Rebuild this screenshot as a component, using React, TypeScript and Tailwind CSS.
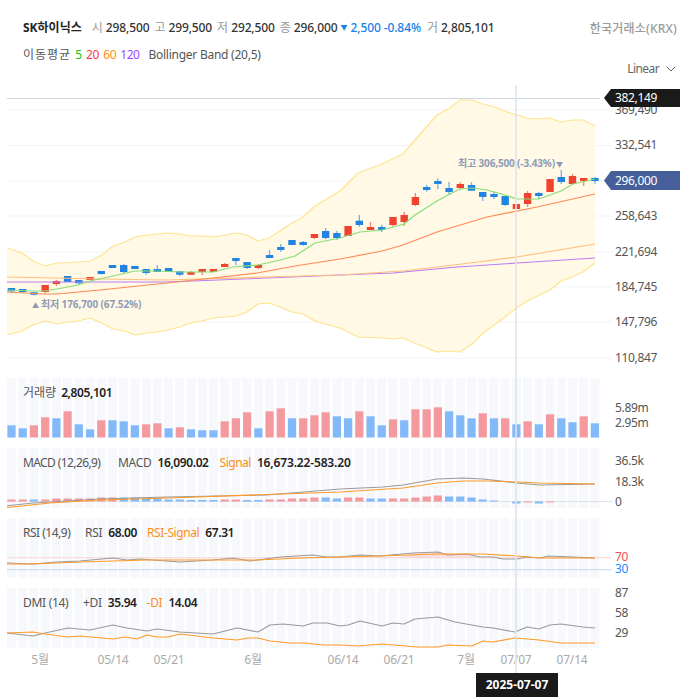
import { ChevronDown } from 'lucide-react';
import type { ReactNode } from 'react';

type Pt = [number, number];
// top, bottom, wickTop, wickBottom, up
type Candle = [number, number, number, number, 0 | 1];

const X = (i: number) => 11.5 + 11.22 * i;
const COUNT = 53;
const idx = Array.from({ length: COUNT }, (_, i) => i);
const pts = (p: Pt[]) => p.map(([x, y]) => `${x},${y}`).join(' ');

const candles: Candle[] = [
  [288, 291.3, 288, 292.7, 0], [289, 292, 289, 293, 0], [292.3, 294.7, 292, 295.5, 0], [285, 292, 285, 293.3, 1],
  [281, 284, 280, 286, 1], [276, 282, 276, 282, 0], [280, 283.3, 280, 284, 0], [277, 280, 277, 280, 1],
  [271, 274, 271, 274.7, 0], [265, 268, 265, 268, 0], [265, 272, 264, 273.3, 0], [266, 269, 266, 269, 0],
  [269, 273, 269, 274.7, 0], [269, 272, 265, 272, 0], [268, 272, 268, 272, 0], [271.3, 274.7, 271, 276, 0],
  [272, 274.7, 271, 274.7, 1], [269, 272, 269, 275, 1], [269, 272, 269, 272, 1], [264, 267, 263, 267, 1],
  [258, 261, 258, 265, 0], [262, 268, 262, 269, 0], [265, 268, 264, 269.3, 1], [255, 258, 250, 258, 0],
  [247, 250, 244, 251.7, 0], [240, 245, 240, 245, 0], [242, 245, 241, 245.7, 0], [234, 238, 234, 239, 1],
  [231, 238, 228, 239, 0], [233, 238, 231, 240, 0], [226, 236, 226, 236, 1], [220.7, 225, 215, 226.7, 0],
  [227, 230, 222, 230, 1], [227, 230, 224.7, 232, 0], [217, 225, 217, 226.7, 1], [215, 222, 212, 226, 1],
  [197, 205, 193, 206, 1], [187, 190, 185, 191.7, 0], [181, 184, 178.3, 189, 0], [188, 192, 182, 195, 0],
  [184, 188, 182.3, 189.3, 1], [185, 190.7, 182.3, 190.7, 0], [192, 197, 192, 201, 0], [194, 197, 191.7, 199, 0],
  [196, 205, 196, 206, 0], [204, 209, 204, 209, 1], [193, 204, 191, 207, 1], [193, 196, 192, 199, 0],
  [179, 192, 179, 192, 1], [177, 182, 170, 184, 0], [176, 184, 174, 184, 1], [178, 181, 178, 186, 1],
  [178, 181, 177, 184, 0],
];

const bandTop: Pt[] = [
  [7, 248], [22, 253], [33, 261], [45, 266], [57, 263], [78, 262], [90, 261], [102, 255], [113, 246], [125, 242],
  [135, 237], [147, 235], [157, 234], [168, 233], [180, 234], [190, 236], [202, 236], [213, 237], [225, 235],
  [236, 233], [247, 235], [258, 241], [269, 238], [280, 231], [292, 223], [303, 217], [315, 206], [325, 200],
  [340, 191], [358, 173], [382, 164], [403, 154], [422, 132], [437, 115], [450, 108], [460, 100], [472, 100],
  [483, 104], [495, 107], [507, 112], [517, 115], [527, 118], [537, 119], [549, 118], [561, 122], [572, 120],
  [583, 120], [595, 126],
];
const bandBottom: Pt[] = [
  [7, 335], [22, 331], [33, 325], [45, 321], [57, 324], [68, 322], [78, 321], [90, 318], [102, 323], [113, 329],
  [125, 331], [135, 335], [147, 333], [157, 332], [168, 330], [180, 327], [190, 323], [202, 321], [213, 318],
  [225, 317], [236, 316], [247, 312], [258, 304], [269, 303], [280, 307], [292, 312], [303, 314], [315, 321],
  [325, 324], [340, 328], [358, 337], [382, 338], [393, 339], [403, 338], [417, 344], [437, 352], [448, 351],
  [460, 352], [472, 344], [483, 333], [497, 323], [515, 309], [527, 301], [550, 290], [561, 281], [572, 277],
  [583, 272], [595, 263],
];
const ma5: Pt[] = [
  [7, 290], [33, 291], [45, 291], [57, 289], [78, 285], [90, 281], [113, 276], [135, 271], [157, 271], [180, 272],
  [213, 272], [233, 267], [258, 265], [280, 260], [295, 256], [315, 243], [340, 238], [360, 232], [382, 230],
  [404, 224], [415, 215], [437, 201], [450, 194], [460, 189], [472, 188], [487, 190], [505, 195], [517, 199],
  [539, 199], [561, 191], [573, 184], [595, 179],
];
const ma20: Pt[] = [
  [7, 292], [43, 294], [57, 294], [100, 290], [167, 283], [213, 278], [257, 273], [295, 266], [340, 259], [382, 251],
  [403, 245], [437, 232], [487, 217], [537, 207], [595, 194],
];
const ma60: Pt[] = [[7, 277], [100, 279], [167, 280], [267, 277], [340, 275], [403, 271], [462, 264], [517, 257], [595, 244]];
const ma120: Pt[] = [[7, 282], [167, 282], [267, 278], [340, 275], [393, 273], [457, 267], [517, 263], [595, 258]];

const volume: [number, 0 | 1][] = [
  [425.3, 0], [428.3, 0], [425.3, 1], [417.3, 1], [418.3, 0], [411.3, 1], [424.3, 0], [429.3, 0], [420.3, 1], [420.3, 0],
  [421.3, 0], [425.3, 0], [424.3, 1], [423.3, 1], [428.3, 0], [427.3, 1], [429.3, 0], [430.3, 0], [430.3, 0], [421.3, 1],
  [418.3, 1], [412.3, 1], [428.3, 0], [411.3, 1], [408.3, 1], [418.3, 0], [418.3, 1], [415.3, 1], [412.3, 1], [416.3, 0],
  [418.3, 0], [411.3, 1], [416.3, 0], [425.3, 0], [419.3, 1], [420.3, 0], [409.3, 1], [409.3, 1], [407.3, 1], [411.3, 0],
  [415.3, 0], [418.3, 0], [413.3, 1], [418.3, 0], [418.3, 1], [424.3, 0], [421.3, 1], [424.3, 0], [414.3, 1], [418.3, 0],
  [422.3, 0], [416.3, 1], [423.3, 0],
];

// macd histogram: [height above the zero line, side]; negative goes below
const macdBars: [number, 0 | 1][] = [
  [2, 1], [2, 1], [2, 0], [2, 1], [3, 1], [3, 1], [3, 1], [3, 1], [4, 1], [4, 1], [4, 0], [4, 0], [3, 0], [3, 0], [2, 0],
  [2, 0], [1.5, 0], [1.5, 0], [1.5, 0], [2, 1], [2, 1], [1.5, 0], [1.5, 0], [2, 1], [2, 1], [3, 1], [3, 1], [4, 1], [4, 0],
  [3, 0], [4, 1], [4, 1], [3, 0], [3, 0], [3, 1], [3, 1], [4, 1], [5, 1], [6, 1], [5, 0], [5, 0], [4, 0], [2, 0], [1, 0],
  [0, 0], [-2, 0], [-1, 1], [-2, 0], [-1, 1], [0, 0], [0, 0], [0, 0], [0, 0],
];
const macdGray: Pt[] = [[7, 505.7], [33, 503], [100, 499], [167, 497], [267, 495], [340, 489], [383, 487], [403, 485], [437, 479], [463, 478], [483, 479], [517, 483], [540, 485], [595, 484]];
const macdOrange: Pt[] = [[7, 507.5], [50, 503], [100, 500], [167, 498], [267, 494.5], [340, 492], [403, 488], [437, 483], [463, 481], [487, 481], [517, 482], [540, 483], [595, 484]];

const rsiGray: Pt[] = [
  [7, 563], [33, 564], [57, 562], [80, 561], [113, 558], [127, 560], [140, 559], [153, 560], [180, 562], [213, 560],
  [233, 558], [250, 561], [280, 557], [313, 555], [327, 557], [340, 557], [360, 555], [380, 556], [413, 553], [438, 552],
  [448, 555], [467, 554], [480, 557], [493, 557], [503, 559], [517, 559], [527, 557], [540, 558], [548, 556], [573, 557], [595, 558],
];
const rsiOrange: Pt[] = [
  [7, 564], [33, 564], [80, 562], [113, 561], [147, 560], [213, 560], [257, 560], [300, 558], [340, 557], [380, 556],
  [438, 554], [483, 554], [517, 556], [540, 558], [595, 558],
];

const dmiGray: Pt[] = [
  [7, 633], [33, 636], [45, 633], [68, 628], [90, 630], [113, 625], [127, 628], [147, 631], [157, 629], [180, 632], [213, 634],
  [237, 628], [258, 632], [270, 625], [283, 624], [303, 626], [313, 623], [327, 623], [340, 626], [348, 625], [360, 621],
  [382, 626], [393, 623], [404, 624], [415, 619], [438, 617], [455, 622], [483, 627], [493, 628], [515, 632], [527, 627],
  [539, 629], [550, 625], [561, 624], [583, 627], [595, 628],
];
const dmiOrange: Pt[] = [
  [7, 633], [33, 632], [45, 634], [68, 637], [80, 636], [113, 639], [125, 637], [137, 639], [147, 635], [157, 637], [168, 637],
  [180, 634], [213, 638], [237, 640], [248, 638], [258, 638], [270, 641], [290, 643], [305, 643], [323, 645], [340, 645],
  [358, 646], [382, 644], [417, 647], [438, 647], [448, 645], [472, 646], [483, 641], [493, 642], [515, 638], [527, 639],
  [539, 640], [561, 643], [573, 643], [583, 643], [595, 643],
];

const priceAxis: [string, number][] = [
  ['369,490', 110], ['332,541', 145], ['258,643', 216], ['221,694', 252], ['184,745', 287], ['147,796', 322], ['110,847', 358],
];
const gridLines = [110, 145.5, 181, 216, 252, 287, 322, 358];
const dateAxis: [string, number][] = [
  ['5월', 40], ['05/14', 113], ['05/21', 169], ['6월', 253], ['06/14', 343], ['06/21', 399], ['7월', 466], ['07/07', 516], ['07/14', 572],
];

const FONT = 'font-["Noto_Sans","Noto_Sans_CJK_KR",sans-serif]';

function AxisText({ y, top, children, className = 'text-[#555]' }: { y: number; top: number; children: ReactNode; className?: string }) {
  return (
    <span className={`absolute left-[615px] text-xs leading-3 tracking-[-0.35px] whitespace-nowrap ${className}`} style={{ top: y - top - 6 }}>
      {children}
    </span>
  );
}

function Stripes({ top, height }: { top: number; height: number }) {
  return (
    <>
      {idx.map((i) => (
        <rect key={i} x={X(i) - 4.5} y={top} width={9} height={height} fill="#f7f8fc" />
      ))}
    </>
  );
}

function Panel({ top, height, className = '', children, labels }: { top: number; height: number; className?: string; children: ReactNode; labels: ReactNode }) {
  return (
    <div className={`relative w-[680px] ${className}`} style={{ height }}>
      <svg className="block" width={680} height={height} viewBox={`0 ${top} 680 ${height}`}>
        {children}
      </svg>
      {labels}
    </div>
  );
}

function Line({ p, color, w = 1.1 }: { p: Pt[]; color: string; w?: number }) {
  return <polyline points={pts(p)} fill="none" stroke={color} strokeWidth={w} strokeLinejoin="round" />;
}

// legend over a sub chart; labels are placed with the widths the reference shows
function Legend({ children }: { children: ReactNode }) {
  return <div className="absolute left-[23px] top-[5px] flex h-5 items-center text-xs tracking-[-0.3px] whitespace-nowrap text-[#555]">{children}</div>;
}

function Value({ children }: { children: ReactNode }) {
  return <span className="font-semibold tracking-[-0.4px] text-[#222]">{children}</span>;
}

function Quote({ k, v }: { k: string; v: string }) {
  return (
    <span className="flex items-center gap-[3px]">
      <span className="text-[#999]">{k}</span>
      <span className="font-medium tracking-[-0.12px] text-[#333]">{v}</span>
    </span>
  );
}

export default function App() {
  return (
    <div className={`relative h-[697px] w-[680px] overflow-hidden bg-white ${FONT}`}>
      <div className="flex h-[44px] items-start justify-between pt-[18px] pl-[23px] pr-[3px]">
        <div className="flex h-5 items-center text-xs whitespace-nowrap">
          <span className="mr-[10px] font-bold text-[#222]">SK하이닉스</span>
          <span className="flex items-center gap-[5px]">
            <Quote k="시" v="298,500" />
            <Quote k="고" v="299,500" />
            <Quote k="저" v="292,500" />
            <Quote k="종" v="296,000" />
          </span>
          <span className="ml-[3px] text-[7px] text-[#1a7fe8]">▼</span>
          <span className="ml-[3px] font-medium tracking-[-0.1px] text-[#1a7fe8]">2,500 -0.84%</span>
          <span className="ml-[6px]"><Quote k="거" v="2,805,101" /></span>
        </div>
        <span className="mt-[3px] text-xs font-medium tracking-[0.2px] whitespace-nowrap text-[#999]">한국거래소(KRX)</span>
      </div>

      <div className="flex h-[41px] items-start justify-between pt-[1px] pl-[23px] pr-[1px]">
        <div className="flex h-5 items-center gap-1 text-xs whitespace-nowrap text-[#555]">
          <span className="tracking-[1px]">이동평균</span>
          <span className="text-[#11c511]">5</span>
          <span className="tracking-[-0.3px] text-[#ff3b47]">20</span>
          <span className="tracking-[-0.3px] text-[#ff8c1a]">60</span>
          <span className="tracking-[-0.5px] text-[#9a4dff]">120</span>
          <span className="ml-[5px] tracking-[-0.25px]">Bollinger Band (20,5)</span>
        </div>
        <div className="mt-[14px] flex h-5 items-center gap-1 text-xs tracking-[-0.6px] text-[#666]">
          Linear
          <ChevronDown size={16} strokeWidth={1.5} />
        </div>
      </div>

      <Panel
        top={85}
        height={293}
        labels={
          <>
            {priceAxis.map(([t, y]) => (
              <AxisText key={t} y={y} top={85}>{t}</AxisText>
            ))}
            <div className="absolute left-[604px] top-[4px] flex h-[18px] w-[76px] items-center bg-[#1a1a1a] pl-[11px] text-xs tracking-[-0.35px] text-white [clip-path:polygon(0_50%,7px_0,100%_0,100%_100%,7px_100%)]">
              382,149
            </div>
            <div className="absolute left-[604px] top-[86px] flex h-[19px] w-[76px] items-center bg-[#465f9b] pl-[11px] text-xs tracking-[-0.35px] text-white [clip-path:polygon(0_50%,7px_0,100%_0,100%_100%,7px_100%)]">
              296,000
            </div>
            <span className="absolute left-[458px] top-[70px] text-[10px] leading-4 font-bold tracking-[-0.15px] whitespace-nowrap text-[#8f9bb5]">
              최고 306,500 (-3.43%)<span className="ml-px text-[7px]">▼</span>
            </span>
            <span className="absolute left-[32px] top-[211px] text-[10px] leading-4 font-bold tracking-[-0.1px] whitespace-nowrap text-[#8f9bb5]">
              <span className="mr-[2px] text-[7px]">▲</span>최저 176,700 (67.52%)
            </span>
          </>
        }
      >
        {gridLines.map((y) => (
          <line key={y} x1={7} x2={612} y1={y} y2={y} stroke="#f1f3f7" />
        ))}
        <line x1={7} x2={600} y1={98.5} y2={98.5} stroke="#cdd5df" />
        <polygon points={pts([...bandTop, ...[...bandBottom].reverse()])} fill="#fff9e6" />
        <Line p={bandTop} color="#ffe38f" w={1.2} />
        <Line p={bandBottom} color="#ffe38f" w={1.2} />
        {candles.map(([t, b, wt, wb, up], i) => (
          <g key={i}>
            <line x1={X(i)} x2={X(i)} y1={wt} y2={wb} stroke={up ? '#f0837a' : '#6fb0ee'} strokeWidth={1.3} />
            <rect x={X(i) - 3.7} y={t} width={7.4} height={b - t} fill={up ? '#f0432f' : '#2184e0'} />
          </g>
        ))}
        <Line p={ma120} color="#bc7cf2" w={1.1} />
        <Line p={ma60} color="#ffbf80" w={1.1} />
        <Line p={ma20} color="#ff8a55" w={1.2} />
        <Line p={ma5} color="#86de76" w={1.2} />
      </Panel>

      <Panel
        top={378}
        height={60}
        labels={
          <>
            <Legend>
              <span className="mr-[5px] tracking-normal">거래량</span>
              <Value>2,805,101</Value>
            </Legend>
            <AxisText y={408} top={378}>5.89m</AxisText>
            <AxisText y={423} top={378}>2.95m</AxisText>
          </>
        }
      >
        <Stripes top={378} height={60} />
        {volume.map(([t, up], i) => (
          <rect key={i} x={X(i) - 4.1} y={t} width={8.2} height={437.5 - t} fill={up ? '#f49a9e' : '#82baf9'} />
        ))}
      </Panel>

      <Panel
        top={448}
        height={60}
        className="mt-[10px]"
        labels={
          <>
            <Legend>
              <span className="w-[95px] tracking-[-0.6px]">MACD (12,26,9)</span>
              <span className="mr-[6px]">MACD</span>
              <span className="mr-[11px]"><Value>16,090.02</Value></span>
              <span className="mr-[6px] text-[#ff8c1a] tracking-[-0.5px]">Signal</span>
              <span className="font-semibold tracking-[-0.15px] text-[#222]">16,673.22-583.20</span>
            </Legend>
            <AxisText y={461} top={448}>36.5k</AxisText>
            <AxisText y={481.5} top={448}>18.3k</AxisText>
            <AxisText y={501.5} top={448}>0</AxisText>
          </>
        }
      >
        <Stripes top={448} height={60} />
        <line x1={7} x2={612} y1={501.5} y2={501.5} stroke="#dfe2e8" />
        {macdBars.map(([h, up], i) => (
          <rect key={i} x={X(i) - 4.1} y={h >= 0 ? 501.5 - h : 501.5} width={8.2} height={Math.abs(h)} fill={up ? '#f49a9e' : '#82baf9'} />
        ))}
        <Line p={macdGray} color="#9a9a9a" />
        <Line p={macdOrange} color="#ff9a26" />
      </Panel>

      <Panel
        top={518}
        height={60}
        className="mt-[10px]"
        labels={
          <>
            <Legend>
              <span className="w-[62px] tracking-[-0.5px]">RSI (14,9)</span>
              <span className="mr-[6px]">RSI</span>
              <span className="mr-[10px]"><Value>68.00</Value></span>
              <span className="mr-[6px] text-[#ff8c1a] tracking-[-0.4px]">RSI-Signal</span>
              <Value>67.31</Value>
            </Legend>
            <AxisText y={557} top={518} className="text-[#ff4a55]">70</AxisText>
            <AxisText y={569} top={518} className="text-[#1a8cff]">30</AxisText>
          </>
        }
      >
        <Stripes top={518} height={60} />
        <polygon points="400,557.7 413,553 438,552 448,555 467,554 478,557.7" fill="#f9d3d9" opacity={0.7} />
        <line x1={7} x2={612} y1={557.7} y2={557.7} stroke="#f8d5d7" />
        <line x1={7} x2={612} y1={569.7} y2={569.7} stroke="#c6d9f0" />
        <Line p={rsiGray} color="#9a9a9a" />
        <Line p={rsiOrange} color="#ff9a26" />
      </Panel>

      <Panel
        top={588}
        height={60}
        className="mt-[10px]"
        labels={
          <>
            <Legend>
              <span className="w-[60px]">DMI (14)</span>
              <span className="mr-[6px]">+DI</span>
              <span className="mr-[10px]"><Value>35.94</Value></span>
              <span className="mr-[6px] text-[#ff8c1a]">-DI</span>
              <Value>14.04</Value>
            </Legend>
            <AxisText y={593} top={588}>87</AxisText>
            <AxisText y={613} top={588}>58</AxisText>
            <AxisText y={633} top={588}>29</AxisText>
          </>
        }
      >
        <Stripes top={588} height={60} />
        <Line p={dmiGray} color="#9a9a9a" />
        <Line p={dmiOrange} color="#ff9a26" />
      </Panel>

      <div className="relative h-[25px] w-[680px]">
        {dateAxis.map(([t, x]) => (
          <span key={t} className="absolute top-[4px] -translate-x-1/2 text-xs leading-4 tracking-[-0.2px] whitespace-nowrap text-[#aaa]" style={{ left: x }}>
            {t}
          </span>
        ))}
      </div>

      {/* crosshair over the panels */}
      <div className="absolute left-[515px] top-[85px] h-[588px] w-[1.5px] bg-[#dfe3ec]/80" />
      <div className="absolute left-[476px] top-[673px] flex h-6 w-[82px] items-center justify-center bg-[#1a1a1a] text-xs font-bold text-white">
        2025-07-07
      </div>
    </div>
  );
}
